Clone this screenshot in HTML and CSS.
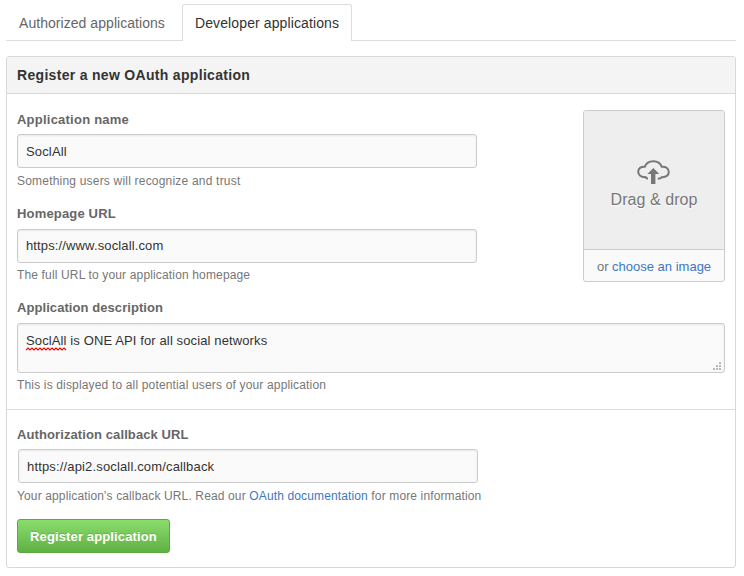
FILE: index.html
```html
<!DOCTYPE html>
<html lang="en">
<head>
<meta charset="utf-8">
<title>Register a new OAuth application</title>
<link rel="stylesheet" href="styles.css">
</head>
<body>
<nav class="tabs">
  <a class="tab"><span class="t-auth">Authorized applications</span></a>
  <a class="tab selected"><span class="t-dev">Developer applications</span></a>
</nav>
<main class="panel">
  <h1 class="panel-title"><span class="t-title">Register a new OAuth application</span></h1>
  <form class="section">
    <div class="top-row">
      <div class="fields">
        <div class="field name">
          <label class="label"><span class="t-name">Application name</span></label>
          <div class="input"><span class="t-v1">SoclAll</span></div>
          <p class="note"><span class="t-n1">Something users will recognize and trust</span></p>
        </div>
        <div class="field homepage">
          <label class="label"><span class="t-home">Homepage URL</span></label>
          <div class="input"><span class="t-v2">https://www.soclall.com</span></div>
          <p class="note"><span class="t-n2">The full URL to your application homepage</span></p>
        </div>
      </div>
      <div class="upload">
        <div class="drop">
          <svg class="cloud" viewBox="0 0 33 25" width="33" height="25">
            <path d="M11 18.8C9.6 18.6 8.9 17.8 8.5 17.1C4 17.5 1.2 15 1.2 11.8C1.2 8.5 4 6.4 7.7 6.8C9.2 3 12 1.2 16.3 1.2C20.5 1.2 23.4 3 24.8 6.8C29 6.4 31.8 8.7 31.8 12C31.8 15.2 29 17.4 25 17.1C24 18.2 22.7 18.8 20.8 18.8" fill="none" stroke="#777" stroke-width="2"/>
            <path d="M16.3 8L22.3 14H18.4V24H14V14H10.3Z" fill="#777"/>
          </svg>
          <span class="drop-text"><span class="t-drag">Drag &amp; drop</span></span>
        </div>
        <div class="choose"><span class="t-choose">or <a class="link">choose an image</a></span></div>
      </div>
    </div>
    <div class="field description">
      <label class="label"><span class="t-desc">Application description</span></label>
      <div class="textarea">
        <span class="t-v3"><span class="misspelled">SoclAll<svg class="squiggle" width="41" height="4" viewBox="0 0 41 4"><path d="M0 3L2 1L4 3L6 1L8 3L10 1L12 3L14 1L16 3L18 1L20 3L22 1L24 3L26 1L28 3L30 1L32 3L34 1L36 3L38 1L40 3" fill="none" stroke="#f00" stroke-width="1.2"/></svg></span> is ONE API for all social networks</span>
        <svg class="grip" width="8" height="8" viewBox="0 0 8 8"><path d="M6 0h2v2H6zM3 3h2v2H3zM6 3h2v2H6zM0 6h2v2H0zM3 6h2v2H3zM6 6h2v2H6z" fill="#b9b9b9"/></svg>
      </div>
      <p class="note"><span class="t-n3">This is displayed to all potential users of your application</span></p>
    </div>
  </form>
  <section class="section callback">
    <label class="label"><span class="t-auth2">Authorization callback URL</span></label>
    <div class="input"><span class="t-v4">https://api2.soclall.com/callback</span></div>
    <p class="note"><span class="t-n4">Your application's callback URL. Read our <a class="link">OAuth documentation</a> for more information</span></p>
    <button class="button" type="button"><span class="t-btn">Register application</span></button>
  </section>
</main>
</body>
</html>
```
FILE: styles.css
```css
* { box-sizing: border-box; }
body {
  margin: 0;
  padding: 4px 8px 8px 6px;
  background: #fff;
  color: #333;
  font: 13px/20px "Liberation Sans", Arial, sans-serif;
}
.tabs {
  display: flex;
  height: 37px;
  border-bottom: 1px solid #ddd;
}
.tab {
  height: 37px;
  padding: 9px 13px;
  font-size: 14px;
  color: #666;
  white-space: nowrap;
}
.tab:first-child { width: 176px; }
.tab.selected {
  width: 170px;
  padding: 8px 12px;
  color: #333;
  background: #fff;
  border: 1px solid #ddd;
  border-bottom: 0;
  border-radius: 3px 3px 0 0;
}
.panel {
  width: 730px;
  height: 512px;
  margin-top: 15px;
  border: 1px solid #d8d8d8;
  border-radius: 3px;
}
.panel-title {
  height: 37px;
  margin: 0;
  padding: 8px 10px;
  font-size: 14px;
  line-height: 20px;
  color: #333;
  background: #f4f4f4;
  border-bottom: 1px solid #d8d8d8;
  border-radius: 2px 2px 0 0;
}
.section { padding: 0 10px; }
.top-row {
  display: flex;
  justify-content: space-between;
  padding-top: 16px;
}
.label {
  display: block;
  height: 20px;
  margin-bottom: 4px;
  font-weight: bold;
  color: #666;
}
.input, .textarea {
  width: 460px;
  height: 34px;
  padding: 7px 8px 5px;
  background: #fafafa;
  border: 1px solid #ccc;
  border-radius: 3px;
  box-shadow: inset 0 1px 2px rgba(0, 0, 0, .075);
}
.note {
  height: 20px;
  margin: 3px 0 0;
  font-size: 12px;
  color: #777;
  white-space: nowrap;
}
.homepage { margin-top: 13px; }
.homepage .label, .description .label { margin-bottom: 5px; }
.homepage .input { padding: 6px 8px; }
.homepage .note, .description .note { margin-top: 2px; }
.upload {
  width: 142px;
  height: 172px;
  background: #fafafa;
  border: 1px solid #ccc;
  border-radius: 3px;
}
.drop {
  display: flex;
  flex-direction: column;
  align-items: center;
  height: 139px;
  padding-top: 49px;
  background: #eee;
  border-bottom: 1px solid #ccc;
  border-radius: 2px 2px 0 0;
}
.cloud { margin-right: 1px; }
.drop-text {
  margin-top: 4px;
  font-size: 16px;
  line-height: 22px;
  color: #777;
  text-shadow: 0 1px 0 #fff;
  white-space: nowrap;
}
.choose {
  padding-top: 7px;
  text-align: center;
  color: #777;
  white-space: nowrap;
}
.link { color: #4078c0; }
.description { margin-top: 13px; }
.textarea {
  position: relative;
  width: 708px;
  height: 50px;
}
.misspelled { position: relative; }
.squiggle { position: absolute; left: 0; bottom: -3px; }
.grip { position: absolute; right: 3px; bottom: 2px; }
.callback {
  margin-top: 14px;
  padding-top: 15px;
  border-top: 1px solid #ddd;
}
.callback .input { margin-left: 1px; }
.button {
  display: block;
  width: 153px;
  height: 34px;
  margin-top: 13px;
  padding: 1px 0 0;
  font: bold 13px/20px "Liberation Sans", Arial, sans-serif;
  color: #fff;
  text-shadow: 0 -1px 0 rgba(0, 0, 0, .15);
  white-space: nowrap;
  background: linear-gradient(#8add6d, #60b044);
  border: 1px solid #5ca941;
  border-radius: 3px;
}

/* Tracking per string */
.t-auth { letter-spacing: .05px; }
.t-dev { letter-spacing: .11px; }
.t-title { letter-spacing: .31px; }
.t-name { letter-spacing: .23px; }
.t-home { letter-spacing: .17px; }
.t-desc { letter-spacing: .07px; }
.t-auth2 { letter-spacing: .1px; }
.t-v1 { letter-spacing: .15px; }
.t-v2 { letter-spacing: .13px; }
.t-v3 { letter-spacing: .12px; }
.t-v4 { letter-spacing: .155px; }
.t-n1 { letter-spacing: .2px; }
.t-n2 { letter-spacing: .15px; }
.t-n3 { letter-spacing: .16px; }
.t-n4 { letter-spacing: .134px; }
.t-btn { letter-spacing: .13px; }
.t-drag { letter-spacing: .06px; }
```
